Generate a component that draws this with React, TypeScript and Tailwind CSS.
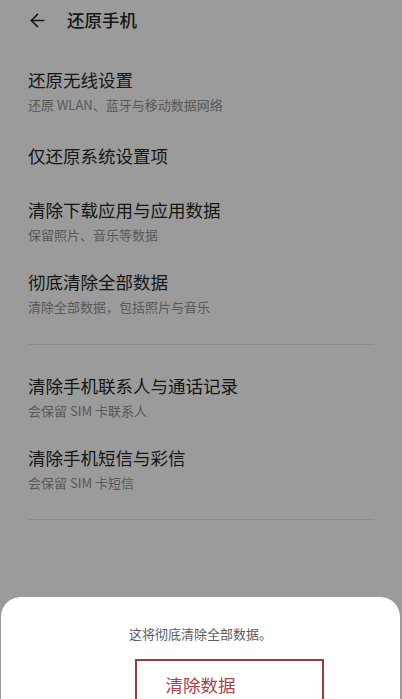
import { ArrowLeft } from 'lucide-react'

type ResetItem = {
  title: string
  desc?: string
}

const groupA: ResetItem[] = [
  { title: '还原无线设置', desc: '还原 WLAN、蓝牙与移动数据网络' },
  { title: '仅还原系统设置项' },
  { title: '清除下载应用与应用数据', desc: '保留照片、音乐等数据' },
  { title: '彻底清除全部数据', desc: '清除全部数据，包括照片与音乐' },
]

const groupB: ResetItem[] = [
  { title: '清除手机联系人与通话记录', desc: '会保留 SIM 卡联系人' },
  { title: '清除手机短信与彩信', desc: '会保留 SIM 卡短信' },
]

function Row({ item }: { item: ResetItem }) {
  return (
    <div className={item.desc ? 'py-[12px]' : 'py-[16px]'}>
      <p className="text-[17.5px] leading-[26px] text-[#151515]">{item.title}</p>
      {item.desc && <p className="mt-[2px] text-[13px] leading-[20px] text-[#585858]">{item.desc}</p>}
    </div>
  )
}

export default function App() {
  return (
    <div
      className="relative h-[699px] w-[402px] overflow-hidden bg-[#9b9b9b]"
      style={{ fontFamily: '"Noto Sans CJK SC", "Noto Sans", sans-serif' }}
    >
      <header className="flex h-[40px] items-center pl-[27px]">
        <ArrowLeft size={21} strokeWidth={1.8} className="text-[#151515]" />
        <h1 className="ml-[19px] text-[17.5px] font-medium leading-[26px] text-[#151515]">还原手机</h1>
      </header>

      <div className="px-[28px] pt-[15px]">
        {groupA.map((it) => (
          <Row key={it.title} item={it} />
        ))}
        <div className="mb-[16px] mt-[15px] h-px bg-[#8d8d8d]" />
        {groupB.map((it) => (
          <Row key={it.title} item={it} />
        ))}
        <div className="mt-[14px] h-px bg-[#8d8d8d]" />
      </div>

      {/* bottom confirm sheet */}
      <div className="absolute bottom-0 left-[1px] right-[2px] top-[597px] rounded-t-[20px] bg-white">
        <p className="pt-[27px] text-center text-[13px] leading-[20px] text-[#5c5c5c]">这将彻底清除全部数据。</p>
        <p className="mt-[29px] text-center text-[17.5px] leading-[24px] text-[#a4424d]">清除数据</p>
      </div>

      {/* highlight frame around the action */}
      <div className="absolute left-[135px] top-[659px] h-[60px] w-[189px] border-2 border-[#9c3a44]" />
    </div>
  )
}
